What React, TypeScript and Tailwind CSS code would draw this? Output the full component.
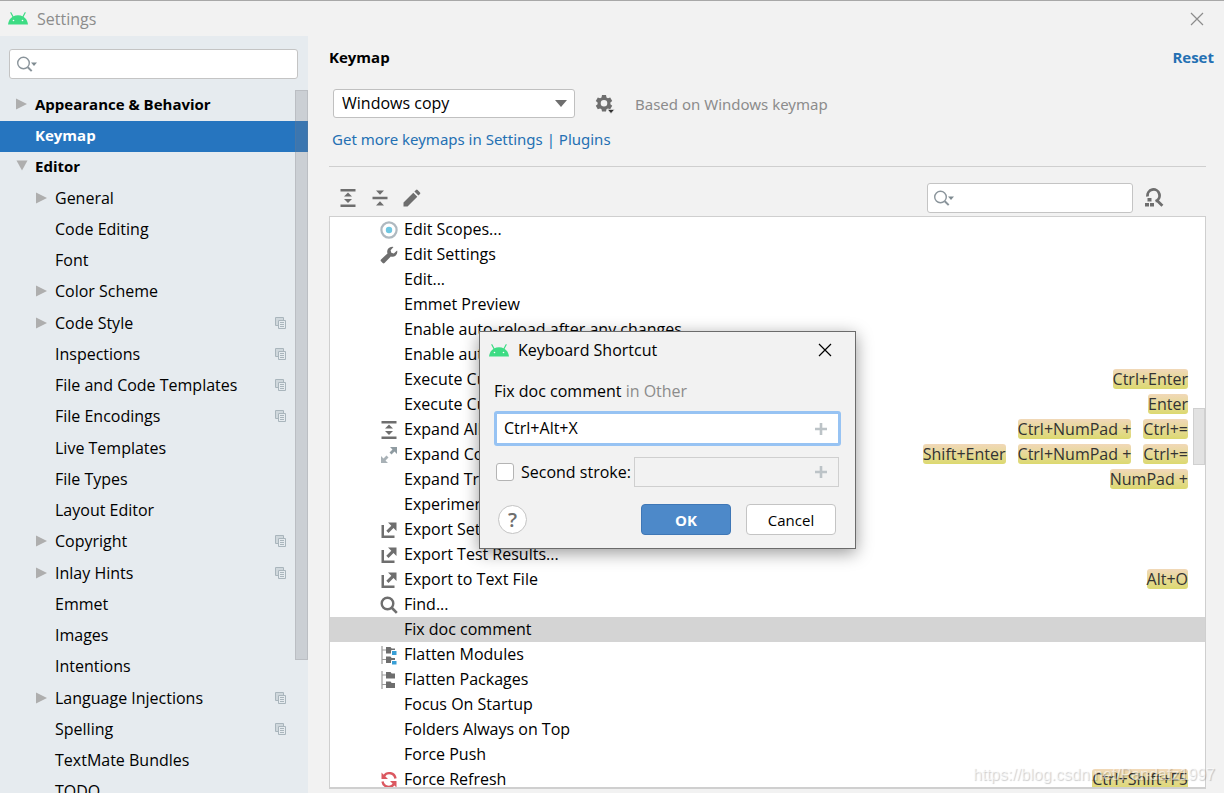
import React, { useState } from "react";

type IconProps = { className?: string };

const AndroidIcon = ({ className }: IconProps) => (
  <svg className={className} width="20" height="13" viewBox="0 0 20 13" aria-hidden="true">
    <path d="M0 12.6C.3 9 2 6 5 4.400 8 3 12 3 15 4.400c3 1.600 4.700 4.600 5 8.200z" fill="#3ddc84" />
    <path d="M5.300 5.300 2.900.7M14.700 5.300 17.100.7" stroke="#3ddc84" strokeWidth="1.200" strokeLinecap="round" />
    <circle cx="5.500" cy="8.500" r=".8" fill="#fff" />
    <circle cx="14.500" cy="8.500" r=".8" fill="#fff" />
  </svg>
);

const CloseIcon = ({ className }: IconProps) => (
  <svg className={className} width="14" height="14" viewBox="0 0 14 14" aria-hidden="true">
    <path d="M1 1 13 13M13 1 1 13" stroke="currentColor" strokeWidth="1.200" fill="none" />
  </svg>
);

const SearchMenuIcon = () => (
  <svg className="shrink-0" width="21" height="16" viewBox="0 0 21 16" aria-hidden="true">
    <circle cx="6.500" cy="7" r="5.800" stroke="#8a949b" strokeWidth="1.400" fill="none" />
    <path d="m10.800 11.200 3.900 3.900" stroke="#8a949b" strokeWidth="2" />
    <path d="M14 6.500h6L17 10z" fill="#7f8b91" />
  </svg>
);

const ExpandAllIcon = () => (
  <svg width="18" height="20" viewBox="0 0 18 20" fill="#6e6e6e" aria-hidden="true">
    <path d="M1.500 1h15v2.500h-15zM1.500 16.500h15V19h-15zM9 4.600l4 4H5zM9 15l4-4H5z" />
  </svg>
);

const CollapseAllIcon = () => (
  <svg width="18" height="20" viewBox="0 0 18 20" fill="#6e6e6e" aria-hidden="true">
    <path d="M1.500 8.700h15v2.600h-15zM9 6.800l4-4.300H5zM9 13.200l4 4.300H5z" />
  </svg>
);

const PencilIcon = () => (
  <svg width="18" height="18" viewBox="0 0 18 18" fill="#6e6e6e" aria-hidden="true">
    <path d="M.5 17.500v-4L10.300 3.700l4 4L4.500 17.500zM11.400 2.600 13 1q.8-.8 1.600 0l2.400 2.400q.8.8 0 1.600l-1.600 1.600z" />
  </svg>
);

const GearIcon = () => (
  <svg width="20" height="20" viewBox="0 0 20 20" aria-hidden="true">
    <path
      fill="#6e6e6e"
      fillRule="evenodd"
      d="M7 1h4l.5 2.400 1.400.8 2.300-.8 2 3.500-1.800 1.600v1.700l1.800 1.600-2 3.400-2.300-.8-1.400.8L11 17.500H7l-.5-2.300-1.400-.8-2.300.8-2-3.400 1.800-1.600V8.500L.8 6.900l2-3.500 2.300.8 1.400-.8zM9 6a3.300 3.300 0 1 0 0 6.600A3.300 3.300 0 0 0 9 6z"
    />
    <path d="M12.500 15.500h7L16 19.500z" fill="#333" stroke="#f2f2f2" strokeWidth=".6" />
  </svg>
);

const FindActionIcon = () => (
  <svg width="20" height="20" viewBox="0 0 20 20" aria-hidden="true">
    <path d="M3.600 8.500A6 6 0 1 1 11.500 13.200M12.800 12.200l5.600 5.600" stroke="#6e6e6e" strokeWidth="2.800" fill="none" />
    <path d="M3.500 10h4v3.500h-4zM1 15h4v3.500H1zM6 15h4v3.500H6z" fill="#6e6e6e" />
  </svg>
);

const ScopeIcon = () => (
  <svg width="18" height="18" viewBox="0 0 18 18" aria-hidden="true">
    <circle cx="9" cy="9" r="7.600" stroke="#afb9c0" strokeWidth="2.200" fill="#fff" />
    <circle cx="9" cy="9" r="3.200" fill="#6fc7e2" />
  </svg>
);

const WrenchIcon = () => (
  <svg width="18" height="18" viewBox="0 0 18 18" fill="#6e6e6e" aria-hidden="true">
    <path d="M13.500.9a5 5 0 0 0-6 6.500L1 13.500q-.8.900 0 1.800l1.700 1.700q.9.800 1.800 0L10.800 10.600a5 5 0 0 0 6.300-6.100l-3.300 3-2.500-.7-.7-2.600z" />
  </svg>
);

const ExpandCornersIcon = () => (
  <svg width="18" height="18" viewBox="0 0 18 18" aria-hidden="true">
    <path d="M10 1h7v7l-2.500-2.500-3 3L9.500 6.500l3-3z" fill="#8f9ba1" />
    <path d="M8 17H1v-7l2.500 2.500 3-3L8.500 11.500l-3 3z" fill="#a8b1b6" />
  </svg>
);

const ExportIcon = () => (
  <svg width="18" height="18" viewBox="0 0 18 18" fill="#6e6e6e" aria-hidden="true">
    <path d="M1.500 4H4v10.500h10.500V17h-13zM8 1.500h8.500V10l-3-3-5 5-2.200-2.200 5-5z" />
  </svg>
);

const FindIcon = () => (
  <svg width="18" height="18" viewBox="0 0 18 18" fill="none" stroke="#6e6e6e" aria-hidden="true">
    <circle cx="7.500" cy="7.500" r="5.800" strokeWidth="2.400" />
    <path d="m11.500 11.500 5.300 5.300" strokeWidth="2.600" />
  </svg>
);

const FlattenIcon = ({ modules = false }: { modules?: boolean }) => (
  <svg width="18" height="20" viewBox="0 0 18 20" aria-hidden="true">
    <path d="M2 1v18M2 5h5M2 14.500h5" stroke="#9a9a9a" strokeWidth="1.200" fill="none" />
    <path d="M6 2h4.500l1.200 1.500H15V8.500H6zM6 11.500h4.500l1.200 1.500H15V18H6z" fill="#6e6e6e" />
    {modules && (
      <path d="M11.500 5.500h5.500v5h-5.500zM11.500 15.500h5.500v4.500h-5.500z" fill="#389fd6" stroke="#fff" strokeWidth="1" />
    )}
  </svg>
);

const RefreshIcon = () => (
  <svg width="18" height="18" viewBox="0 0 18 18" aria-hidden="true">
    <path d="M15.500 7.500A6.300 6.300 0 0 0 4 5M2.500 10.500A6.300 6.300 0 0 0 14 13" stroke="#db5860" strokeWidth="2.400" fill="none" />
    <path d="M1.500 1.500V8H8zM16.500 16.500V10H10z" fill="#db5860" />
  </svg>
);

const CopyIcon = () => (
  <svg className="shrink-0" width="12" height="12" viewBox="0 0 12 12" fill="none" aria-hidden="true">
    <path d="M3 8.500H.5v-8h8V3" stroke="#a9b5bc" />
    <path d="M1 1h7v2H3v5H1z" fill="#cfd7dc" />
    <path d="M3.500 3.500h7v8h-7z" stroke="#a9b5bc" />
    <path d="M5 5.500h4M5 7.500h4M5 9.500h4" stroke="#a9b5bc" />
  </svg>
);

const PlusIcon = () => (
  <svg width="14" height="14" viewBox="0 0 14 14" aria-hidden="true">
    <path d="M7 1v12M1 7h12" stroke="#bcc3c7" strokeWidth="2.600" />
  </svg>
);

const TreeArrow = ({ open }: { open: boolean }) => (
  <svg width="12" height="12" viewBox="0 0 12 12" fill="#aeaeae" aria-hidden="true">
    {open ? <path d="M.5.500h11L6 10.500z" /> : <path d="M0 .5v11L11 6z" />}
  </svg>
);

type TreeItem = { label: string; level: 0 | 1; arrow?: "open" | "closed"; project?: boolean; selected?: boolean };

const tree: TreeItem[] = [
  { label: "Appearance & Behavior", level: 0, arrow: "closed" },
  { label: "Keymap", level: 0, selected: true },
  { label: "Editor", level: 0, arrow: "open" },
  { label: "General", level: 1, arrow: "closed" },
  { label: "Code Editing", level: 1 },
  { label: "Font", level: 1 },
  { label: "Color Scheme", level: 1, arrow: "closed" },
  { label: "Code Style", level: 1, arrow: "closed", project: true },
  { label: "Inspections", level: 1, project: true },
  { label: "File and Code Templates", level: 1, project: true },
  { label: "File Encodings", level: 1, project: true },
  { label: "Live Templates", level: 1 },
  { label: "File Types", level: 1 },
  { label: "Layout Editor", level: 1 },
  { label: "Copyright", level: 1, arrow: "closed", project: true },
  { label: "Inlay Hints", level: 1, arrow: "closed", project: true },
  { label: "Emmet", level: 1 },
  { label: "Images", level: 1 },
  { label: "Intentions", level: 1 },
  { label: "Language Injections", level: 1, arrow: "closed", project: true },
  { label: "Spelling", level: 1, project: true },
  { label: "TextMate Bundles", level: 1 },
  { label: "TODO", level: 1 },
];

type Action = { label: string; icon?: React.ReactNode; keys?: string[]; selected?: boolean };

const actions: Action[] = [
  { label: "Edit Scopes...", icon: <ScopeIcon /> },
  { label: "Edit Settings", icon: <WrenchIcon /> },
  { label: "Edit..." },
  { label: "Emmet Preview" },
  { label: "Enable auto-reload after any changes" },
  { label: "Enable auto-reload after external changes" },
  { label: "Execute Current Statement in Console", keys: ["Ctrl+Enter"] },
  { label: "Execute Current Statement", keys: ["Enter"] },
  { label: "Expand All", icon: <ExpandAllIcon />, keys: ["Ctrl+NumPad +", "Ctrl+="] },
  { label: "Expand Component", icon: <ExpandCornersIcon />, keys: ["Shift+Enter", "Ctrl+NumPad +", "Ctrl+="] },
  { label: "Expand Tree Node", keys: ["NumPad +"] },
  { label: "Experimental Features..." },
  { label: "Export Settings...", icon: <ExportIcon /> },
  { label: "Export Test Results...", icon: <ExportIcon /> },
  { label: "Export to Text File", icon: <ExportIcon />, keys: ["Alt+O"] },
  { label: "Find...", icon: <FindIcon /> },
  { label: "Fix doc comment", selected: true },
  { label: "Flatten Modules", icon: <FlattenIcon modules /> },
  { label: "Flatten Packages", icon: <FlattenIcon /> },
  { label: "Focus On Startup" },
  { label: "Folders Always on Top" },
  { label: "Force Push" },
  { label: "Force Refresh", icon: <RefreshIcon />, keys: ["Ctrl+Shift+F5"] },
];

function Sidebar() {
  return (
    <aside className="relative flex w-[308px] shrink-0 flex-col overflow-hidden bg-[#e6ebef]">
      <label className="mt-[13px] mr-[10px] ml-[9px] flex h-[30px] shrink-0 items-center rounded-[3px] border border-[#c4c4c4] bg-white px-[7px]">
        <SearchMenuIcon />
        <input aria-label="Search settings" className="min-w-0 flex-1 bg-transparent px-1 outline-none" />
      </label>
      <ul className="mt-[11px]">
        {tree.map((item) => (
          <li
            key={item.label}
            className={`flex h-[31px] items-center pr-[21px] pb-1 nth-[4n+3]:h-8 ${
              item.level === 0 ? "pl-4 text-[15px] font-bold" : "pl-9"
            } ${item.selected ? "bg-[#2675bf] text-white" : ""}`}
          >
            <span className="w-[19px] shrink-0">{item.arrow && <TreeArrow open={item.arrow === "open"} />}</span>
            <span className="flex-1 leading-5 whitespace-nowrap">{item.label}</span>
            {item.project && <CopyIcon />}
          </li>
        ))}
      </ul>
      <div className="absolute top-[54px] right-0 h-[570px] w-[13px] border border-[#7b7b82]/20 bg-[#7b7b82]/25" />
    </aside>
  );
}

function ActionList() {
  return (
    <div className="relative mr-[18px] mb-1 min-h-0 flex-1 overflow-hidden border border-b-2 border-[#cfcfcf] bg-white">
      <ul>
        {actions.map((action) => (
          <li
            key={action.label}
            className={`flex h-[25px] items-center pr-[17px] pl-[50px] ${action.selected ? "bg-[#d4d4d4]" : ""}`}
          >
            <span className="flex w-6 shrink-0">{action.icon}</span>
            <span className="flex-1 pb-0.5 whitespace-nowrap">{action.label}</span>
            <span className="flex gap-3 pb-0.5">
              {action.keys?.map((key) => (
                <kbd
                  key={key}
                  className="h-5 rounded-[3px] bg-linear-to-b from-[#f1d8b8] to-[#dcd96f] font-['Open_Sans','Noto_Sans',sans-serif] leading-5 whitespace-nowrap text-[#333]"
                >
                  {key}
                </kbd>
              ))}
            </span>
          </li>
        ))}
      </ul>
      <div className="absolute top-[191px] right-0 h-[57px] w-3 border border-[#d0d0d0] bg-[#e2e2e2]" />
    </div>
  );
}

function ShortcutDialog() {
  const [stroke, setStroke] = useState("Ctrl+Alt+X");
  return (
    <div
      role="dialog"
      aria-labelledby="dialog-title"
      className="absolute top-[330px] left-[479px] w-[377px] border border-[#6b6b6b] bg-[#f2f2f2] pb-[13px] shadow-[0_4px_16px_rgba(0,0,0,0.4)]"
    >
      <header className="flex h-9 items-center pr-[23px] pl-[9px]">
        <AndroidIcon />
        <h2 id="dialog-title" className="ml-[9px] flex-1">
          Keyboard Shortcut
        </h2>
        <button type="button" aria-label="Close">
          <CloseIcon />
        </button>
      </header>
      <div className="px-[14px]">
        <label htmlFor="first-stroke" className="mt-[11px] block leading-6">
          Fix doc comment <span className="text-[#8c8c8c]">in Other</span>
        </label>
        <div className="mt-2 flex h-[35px] items-center rounded-[3px] border-3 border-[#97c3f3] bg-white pr-[10px] pl-[7px]">
          <input
            id="first-stroke"
            value={stroke}
            onChange={(event) => setStroke(event.target.value)}
            className="min-w-0 flex-1 bg-transparent pb-0.5 outline-none"
          />
          <button type="button" aria-label="Add special key to the first stroke">
            <PlusIcon />
          </button>
        </div>
        <div className="mt-[11px] mr-0.5 flex items-center">
          <input
            id="second-stroke-on"
            type="checkbox"
            className="ml-0.5 size-[18px] shrink-0 appearance-none rounded-[3px] border border-[#b4b4b4] bg-white"
          />
          <label htmlFor="second-stroke-on" className="w-[120px] shrink-0 pl-[7px] whitespace-nowrap">
            Second stroke:
          </label>
          <div className="flex h-[30px] min-w-0 flex-1 items-center border border-[#cfcfcf] pr-[10px]">
            <input aria-label="Second stroke" disabled className="min-w-0 flex-1 bg-transparent" />
            <button type="button" disabled aria-label="Add special key to the second stroke">
              <PlusIcon />
            </button>
          </div>
        </div>
        <footer className="mt-[17px] flex items-center pr-[5px] pl-1">
          <button
            type="button"
            aria-label="Help"
            className="size-[29px] rounded-full border border-[#c4c4c4] bg-white text-xl leading-none font-semibold text-[#6e6e6e]"
          >
            ?
          </button>
          <button
            type="button"
            className="ml-auto h-[31px] w-[90px] rounded-[4px] border border-[#3f77b6] bg-[#4d89c9] text-[15px] font-bold text-white"
          >
            OK
          </button>
          <button type="button" className="ml-[15px] h-[31px] w-[90px] rounded-[4px] border border-[#c4c4c4] bg-white text-[15px]">
            Cancel
          </button>
        </footer>
      </div>
    </div>
  );
}

export default function App() {
  return (
    <div className="relative flex h-screen flex-col overflow-hidden border-t border-[#a8a8a8] bg-[#f2f2f2] font-['Open_Sans','Noto_Sans',sans-serif] text-[16px] leading-5 text-black">
      <header className="flex h-[35px] shrink-0 items-center pr-5 pl-2 text-[#8c8c8c]">
        <AndroidIcon />
        <h1 className="ml-[9px] flex-1">Settings</h1>
        <button type="button" aria-label="Close settings">
          <CloseIcon />
        </button>
      </header>
      <div className="flex min-h-0 flex-1">
        <Sidebar />
        <main className="flex min-w-0 flex-1 flex-col pl-[21px]">
          <div className="mt-[11px] flex items-center justify-between pr-[10px] text-[15px] leading-5 font-bold">
            <h2>Keymap</h2>
            <a href="#reset" className="text-[#2470b3]">
              Reset
            </a>
          </div>
          <div className="mt-[22px] ml-1 flex items-center">
            <div className="relative w-[242px]">
              <select
                aria-label="Keymap scheme"
                className="h-[29px] w-full appearance-none rounded-[3px] border border-[#c0c0c0] bg-white pb-0.5 pl-2"
              >
                <option>Windows copy</option>
              </select>
              <svg className="pointer-events-none absolute top-[11px] right-2" width="12" height="7" viewBox="0 0 12 7" aria-hidden="true">
                <path d="M0 0h12L6 7z" fill="#6e6e6e" />
              </svg>
            </div>
            <button type="button" aria-label="Scheme actions" className="ml-5">
              <GearIcon />
            </button>
            <span className="ml-5 font-['Noto_Sans',sans-serif] text-[15px] leading-5 text-[#8c8c8c]">
              Based on Windows keymap
            </span>
          </div>
          <a
            href="#plugins"
            className="mt-[11px] ml-[3px] self-start font-['Noto_Sans',sans-serif] text-[15px] leading-5 text-[#2470b3]"
          >
            Get more keymaps in Settings | Plugins
          </a>
          <hr className="mt-[17px] mr-[18px] border-[#cfcfcf]" />
          <div className="mt-4 mb-1 flex h-[29px] shrink-0 items-center pr-[60px] pl-[10px]">
            <div className="flex flex-1 items-center gap-[14px]">
              <button type="button" aria-label="Expand all">
                <ExpandAllIcon />
              </button>
              <button type="button" aria-label="Collapse all">
                <CollapseAllIcon />
              </button>
              <button type="button" aria-label="Edit shortcut">
                <PencilIcon />
              </button>
            </div>
            <label className="flex h-[30px] w-[206px] items-center rounded-[3px] border border-[#c4c4c4] bg-white px-[6px]">
              <SearchMenuIcon />
              <input aria-label="Search actions" className="min-w-0 flex-1 bg-transparent px-1 outline-none" />
            </label>
            <button type="button" aria-label="Find actions by shortcut" className="ml-[11px]">
              <FindActionIcon />
            </button>
          </div>
          <ActionList />
        </main>
      </div>
      <ShortcutDialog />
      <p className="pointer-events-none absolute right-[9px] bottom-2 font-['Liberation_Sans',sans-serif] text-base leading-5 text-white/60 [text-shadow:1px_1px_1px_rgba(0,0,0,0.2)]">
        https://blog.csdn.net/Pandafz1997
      </p>
    </div>
  );
}
